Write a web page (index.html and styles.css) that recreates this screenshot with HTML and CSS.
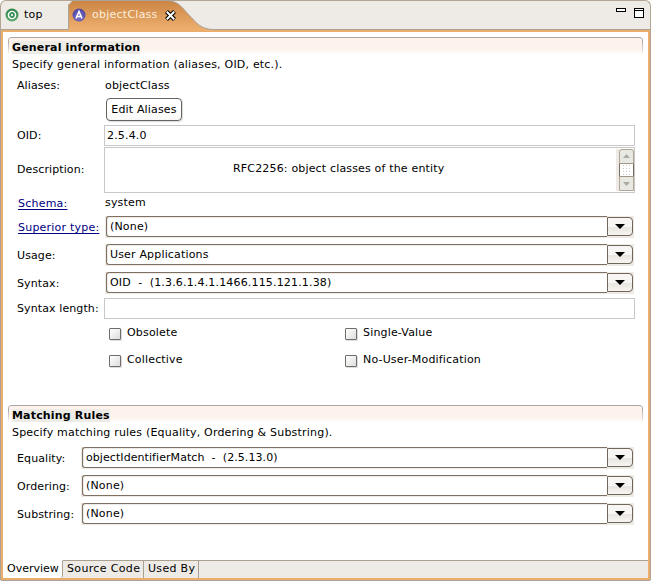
FILE: index.html
```
<!DOCTYPE html>
<html lang="en">
<head>
<meta charset="utf-8">
<title>objectClass</title>
<link rel="stylesheet" href="styles.css">
</head>
<body>
<div class="window">
  <header class="tabbar">
    <svg class="tab-shape" width="651" height="30" viewBox="0 0 651 30">
      <defs>
        <linearGradient id="tab" x1="0" y1="0" x2="0" y2="1"><stop offset="0" stop-color="#cb8442"/><stop offset="1" stop-color="#eeb06f"/></linearGradient>
        <linearGradient id="green" x1="0" y1="0" x2="0" y2="1"><stop offset="0" stop-color="#2d8249"/><stop offset="1" stop-color="#5baa70"/></linearGradient>
        <radialGradient id="violet" cx=".5" cy=".65" r=".6"><stop offset="0" stop-color="#8379cc"/><stop offset="1" stop-color="#5045a0"/></radialGradient>
      </defs>
      <path d="M68.500 29.500V5L73 .5H166C178 .5 182 7.500 189 15C196 22 200 29.500 214 29.500V30H68z" fill="url(#tab)"/>
      <path d="M0 29.500H68.500V5L73 .5H166C178 .5 182 7.500 189 15C196 22 200 29.500 214 29.500H651" fill="none" stroke="#a9a39c"/>
    </svg>
    <div class="tab tab-top">
      <svg class="icon" width="14" height="14" viewBox="0 0 14 14"><circle cx="7" cy="7" r="6.500" fill="url(#green)"/><circle cx="7" cy="7" r="4.300" fill="#fff"/><circle cx="7" cy="7" r="2" fill="#fff" stroke="#3c9258" stroke-width="1.800"/></svg>
      <span>top</span>
    </div>
    <div class="tab tab-object">
      <svg class="icon" width="14" height="14" viewBox="0 0 14 14"><circle cx="7" cy="7" r="6.500" fill="url(#violet)"/><path d="M4 10.500L7 3.500L10 10.500M5 8.500H9" fill="none" stroke="#fff" stroke-width="1.500"/></svg>
      <span>objectClass</span>
      <svg class="close" width="11" height="11" viewBox="0 0 11 11"><path d="M1.500 1.500L9.500 9.500M9.500 1.500L1.500 9.500" stroke="#000" stroke-width="4.200"/><path d="M1.800 1.800L9.200 9.200M9.200 1.800L1.800 9.200" stroke="#fff" stroke-width="2"/></svg>
    </div>
    <svg class="controls" width="29" height="11" viewBox="0 0 29 11" shape-rendering="crispEdges"><path d="M.5 .5H9.500V3.500H.5zM18.500 .5H27.500V9.500H18.500zM18.500 2.500H27.500" fill="#fff" stroke="#000"/></svg>
  </header>
  <main class="body">
    <section class="section general">
      <div class="section-head"><h2 class="w-general">General information</h2></div>
      <p class="hint">Specify general information (aliases, OID, etc.).</p>
      <div class="form">
        <div class="row r-alias"><label>Aliases:</label><span class="value">objectClass</span></div>
        <div class="row r-button"><label></label><button>Edit Aliases</button></div>
        <div class="row r-oid"><label>OID:</label><div class="field">2.5.4.0</div></div>
        <div class="row r-desc"><label>Description:</label>
          <div class="field area"><span>RFC2256: object classes of the entity</span>
            <div class="scroll"><svg width="15" height="42" viewBox="0 0 15 42"><path d="M.5 41.500V3Q.5 .5 3 .5H12Q14.500 .5 14.500 3V41.500z" fill="#e9e9e4" stroke="#b1a595"/><path d="M1 14.500H14V27.500H1z" fill="#fff"/><path d="M0 14.500H15M0 27.500H15" stroke="#a29585"/><path d="M.5 15V27M14.500 15V27" stroke="#766c60"/><path d="M4 16.500H12M4 19.500H12M4 22.500H12M4 25.500H12" stroke="#c9c9c5" stroke-dasharray="1 2"/><path d="M4 9H11L7.500 5zM4 33H11L7.500 37z" fill="#aaa9a2"/></svg></div>
          </div>
        </div>
        <div class="row r-schema"><label><a>Schema:</a></label><span class="value">system</span></div>
        <div class="row combo-row"><label><a>Superior type:</a></label><div class="combo"><span>(None)</span><i></i></div></div>
        <div class="row combo-row"><label>Usage:</label><div class="combo"><span>User Applications</span><i></i></div></div>
        <div class="row combo-row"><label>Syntax:</label><div class="combo"><span>OID&nbsp; -&nbsp; (1.3.6.1.4.1.1466.115.121.1.38)</span><i></i></div></div>
        <div class="row r-length"><label>Syntax length:</label><div class="field"></div></div>
        <div class="checks">
          <div class="check"><b></b><span>Obsolete</span></div><div class="check"><b></b><span>Single-Value</span></div>
          <div class="check"><b></b><span>Collective</span></div><div class="check"><b></b><span>No-User-Modification</span></div>
        </div>
      </div>
    </section>
    <section class="section matching">
      <div class="section-head"><h2 class="w-matching">Matching Rules</h2></div>
      <p class="hint">Specify matching rules (Equality, Ordering &amp; Substring).</p>
      <div class="form">
        <div class="row combo-row"><label>Equality:</label><div class="combo"><span class="w-equality">objectIdentifierMatch&nbsp; -&nbsp; (2.5.13.0)</span><i></i></div></div>
        <div class="row combo-row"><label>Ordering:</label><div class="combo"><span>(None)</span><i></i></div></div>
        <div class="row combo-row"><label>Substring:</label><div class="combo"><span>(None)</span><i></i></div></div>
      </div>
    </section>
  </main>
  <footer class="pages"><div class="page active">Overview</div><div class="page source">Source Code</div><div class="page used">Used By</div><div class="rest"></div></footer>
</div>
</body>
</html>
```
FILE: styles.css
```
* { box-sizing: border-box; }
body { margin: 0; background: #fff; font: 11px/15px "DejaVu Sans", sans-serif; letter-spacing: .17px; color: #000; overflow: hidden; }
h2, p { margin: 0; }
label, span, a, p, h2, button, .page { white-space: nowrap; }
.window { width: 651px; height: 581px; display: flex; flex-direction: column; background: #eeebe6; border-radius: 6px 6px 0 0; padding-bottom: 1px; }
.tabbar { height: 30px; flex: none; position: relative; display: flex; align-items: flex-start; border: 1px solid #b3a594; border-bottom: 0; border-radius: 6px 6px 0 0; }
.tab-shape { position: absolute; left: -1px; top: -1px; }
.tab { position: relative; display: flex; height: 28px; align-items: center; gap: 5px; line-height: 14px; }
.tab-top { width: 68px; padding-left: 4px; }
.tab-object { padding-left: 3px; color: #fbeede; letter-spacing: .25px; }
.tab-object span { margin-left: 1px; }
.close { margin-left: 2px; }
.controls { position: relative; margin: 7px 5px 0 auto; }
.body { height: 530px; flex: none; background: #fff; border: solid #ebad6b; border-width: 2px 2px 0; margin: 0 1px; padding: 5px 5px 0; box-shadow: -1px 0 #aaa29b, 1px 0 #aaa29b; }
.section { width: 635px; }
.general { height: 368px; }
.section-head { height: 18px; padding: 3px 4px 0; border-top: 1px solid #aaa6a4; border-radius: 4px 4px 0 0; background: linear-gradient(#aaa6a4 20%, #fff) left / 1px 100% no-repeat, linear-gradient(#aaa6a4 20%, #fff) right / 1px 100% no-repeat, linear-gradient(#fdf3ec 65%, #fff); }
h2 { font-size: 11px; line-height: 13px; height: 13px; background: #edebe6; }
.w-general { width: 128px; }
.w-matching { width: 98px; }
.hint { height: 23px; padding: 2px 0 0 4px; letter-spacing: .2px; }
.row { display: flex; padding-left: 9px; }
.row label { width: 87px; flex: none; letter-spacing: .1px; }
.value { padding-left: 1px; }
.r-alias { height: 20px; }
.r-button { height: 27px; }
button { width: 76px; height: 23px; margin-left: 2px; padding: 0; font: inherit; letter-spacing: inherit; border: 1px solid #65635f; border-radius: 4px; background: linear-gradient(#fff 45%, #f9f8f7); box-shadow: 1px 1px 1px #ddd; }
.field { width: 531px; height: 21px; border: 1px solid #c9c7c7; padding: 2px; }
.r-oid { height: 22px; }
.r-oid label, .r-length label { padding-top: 3px; }
.r-desc { height: 48px; }
.r-desc label { padding-top: 15px; }
.area { height: 46px; padding: 1px 0 0 128px; display: flex; justify-content: space-between; }
.area span { padding-top: 12px; }
.scroll { width: 18px; height: 42px; padding-left: 3px; background: #eeebe6; }
.scroll svg { display: block; }
.r-schema { height: 21px; }
.r-schema label { padding-top: 1px; }
a { color: #000080; text-decoration: underline; text-underline-offset: 2px; margin-left: 1px; letter-spacing: .22px; }
.combo-row { height: 28px; }
.combo-row label { padding-top: 4px; }
.combo { width: 529px; height: 22px; margin-left: 1px; background: #eeebe6; display: flex; padding: 0 1px; }
.combo span { flex: 1; height: 21px; border: 1px solid #7e7163; border-right: 0; border-radius: 3px 0 0 3px; background: #fff; padding: 2px 3px; box-shadow: inset 1px 1px #eeebe6; }
.combo .w-equality { letter-spacing: .07px; }
.combo i { width: 26px; height: 19px; margin-top: 1px; border: 1px solid #706659; border-radius: 0 4px 4px 0; background: linear-gradient(#f8f6f4 50%, #e9e5e1 55%, #f7f5f2); display: flex; justify-content: center; }
.combo i::before { content: ""; border: solid transparent; border-width: 5px 5px 0; border-top-color: #000; height: 0; margin-top: 6px; }
.r-length { height: 27px; margin-top: -2px; }
.checks { display: grid; grid-template-columns: 236px 236px; grid-auto-rows: 27px; padding-left: 101px; }
.check { display: flex; gap: 6px; }
.check b { width: 12px; height: 12px; margin-top: 3px; border: 1px solid #706d69; border-radius: 1px; background: linear-gradient(135deg, #fff, #ddd); box-shadow: 1px 1px #ddd; }
.matching .row label { width: 64px; }
.matching .hint { height: 24px; }
.matching .combo { width: 553px; margin-left: 0; }
.pages { height: 20px; flex: none; display: flex; margin: 0 1px; border: solid #ebad6b; border-width: 0 2px 2px; box-shadow: 0 1px #aaa29b, -1px 0 #aaa29b, 1px 0 #aaa29b; line-height: 14px; }
.page { border-top: 1px solid #aaa090; border-right: 1px solid #aaa090; height: 18px; padding: 1px 0 0 4px; }
.active { width: 60px; background: #fff; border-top-color: #fff; border-radius: 0 0 3px 0; letter-spacing: 0; }
.source { width: 81px; letter-spacing: .35px; }
.used { width: 55px; letter-spacing: .3px; }
.rest { flex: 1; border-top: 1px solid #aaa090; }
```
